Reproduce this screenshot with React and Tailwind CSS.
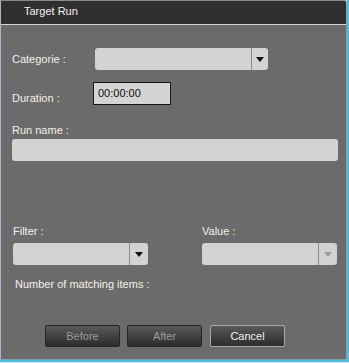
import React from "react";

function Combo({ width, btnWidth, disabled }) {
  return (
    <div
      className="flex h-[22px] rounded-[3px] bg-[#d3d3d3]"
      style={{ width }}
    >
      <div className="flex-1" />
      <div
        className="flex items-center justify-center border-l border-l-[#8c8c8c]"
        style={{ width: btnWidth }}
      >
        <svg width="8" height="5" viewBox="0 0 8 5">
          <path d="M0 0 H8 L4 5 Z" fill={disabled ? "#9a9a9a" : "#111111"} />
        </svg>
      </div>
    </div>
  );
}

function Btn({ children, active }) {
  return (
    <button
      className={
        "h-[22px] rounded-[2px] border bg-gradient-to-b from-[#5a5a5a] to-[#2c2c2c] text-[11px] " +
        (active ? "border-[#a8a8a8] text-[#f4f4f4]" : "border-[#262626] text-[#9c9c9c]")
      }
      style={{ width: 75 }}
    >
      {children}
    </button>
  );
}

export default function App() {
  return (
    <div
      className="w-[349px] h-[363px] bg-[#dce6ee] pb-px"
      style={{ fontFamily: '"Liberation Sans", Arial, sans-serif' }}
    >
      <div className="h-full border-r-2 border-b-2 border-[#36c4ea]">
        <div className="h-full flex flex-col bg-[#6b6b6b] border-l border-l-[#a4b8d4] border-r border-r-[#9a9a9a] border-b border-b-[#9a9a9a] border-t border-t-[#8a8a8a] rounded-tr-[3px] overflow-hidden">
          {/* title bar */}
          <div className="h-[23px] flex items-center bg-[#2f2f2f] pl-[23px] pb-[3px] text-[11px] text-[#f2f2f2]">
            Target Run
          </div>
          <div className="h-px bg-[#d6d6d6]" />

          <div className="flex flex-col pl-[11px] text-[11px] text-[#f4f1ea]">
            {/* Categorie */}
            <div className="mt-[23px] flex items-center h-[22px]">
              <div className="w-[83px]">Categorie :</div>
              <Combo width={173} btnWidth={17} />
            </div>

            {/* Duration */}
            <div className="mt-[12px] flex items-center h-[23px]">
              <div className="w-[81px] pt-[10px]">Duration :</div>
              <div className="w-[78px] h-[23px] border border-[#161616] bg-[#d4d4d4] pl-[4px] flex items-center pb-[1px] text-[#111111]">
                00:00:00
              </div>
            </div>

            {/* Run name */}
            <div className="mt-[18px] h-[14px] leading-[14px]">Run name :</div>
            <div className="mt-[2px] w-[326px] h-[22px] rounded-[3px] bg-[#d3d3d3]" />

            {/* Filter / Value */}
            <div className="mt-[63px] flex">
              <div className="ml-[1px] w-[189px] flex flex-col">
                <div className="h-[14px] leading-[14px]">Filter :</div>
                <div className="mt-[5px]">
                  <Combo width={135} btnWidth={19} />
                </div>
              </div>
              <div className="flex flex-col">
                <div className="h-[14px] leading-[14px]">Value :</div>
                <div className="mt-[5px]">
                  <Combo width={135} btnWidth={19} disabled />
                </div>
              </div>
            </div>

            <div className="mt-[12px] ml-[3px] h-[14px] leading-[14px]">
              Number of matching items :
            </div>

            {/* buttons */}
            <div className="mt-[34px] ml-[33px] flex gap-[7px]">
              <Btn>Before</Btn>
              <Btn>After</Btn>
              <div className="ml-px">
                <Btn active>Cancel</Btn>
              </div>
            </div>
          </div>
        </div>
      </div>
    </div>
  );
}
